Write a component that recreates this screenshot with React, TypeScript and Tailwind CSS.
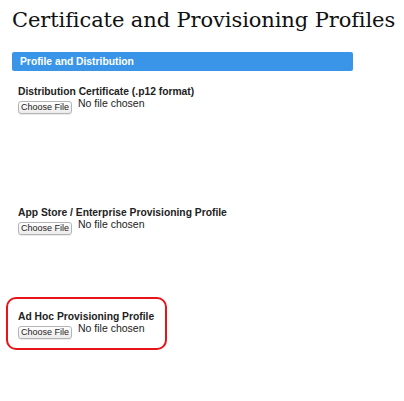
import React from "react";

function FileField({ label }: { label: string }) {
  return (
    <div>
      <div className="text-[10.3px] font-bold leading-[13px] text-[#222]">{label}</div>
      <div className="flex items-start mt-[1px]">
        <button className="mt-[2px] h-[13px] w-[54px] rounded-[3px] border border-[#b5b5b5] bg-gradient-to-b from-white to-[#ececec] text-[9px] leading-[11px] text-[#222] shadow-[0_1px_0_rgba(0,0,0,0.08)]">
          Choose File
        </button>
        <span className="ml-[6px] -mt-[2px] text-[10.5px] leading-[13px] text-[#222]">No file chosen</span>
      </div>
    </div>
  );
}

export default function App() {
  return (
    <div className="w-[404px] h-[401px] bg-white" style={{ fontFamily: '"Liberation Sans", Arial, sans-serif' }}>
      <h1
        className="pl-3 pt-[6px] h-[37px] text-[21px] leading-[28px] tracking-[-0.1px] text-[#111] whitespace-nowrap"
        style={{ fontFamily: '"DejaVu Serif", "Liberation Serif", serif' }}
      >
        Certificate and Provisioning Profiles
      </h1>
      <div className="ml-3 mt-[15px] w-[341px] h-[19px] rounded-[2px] bg-[#3a95e8] pl-2 text-[10.3px] font-bold leading-[19px] text-white">
        Profile and Distribution
      </div>
      <div className="pl-[18px] mt-[14px]">
        <FileField label="Distribution Certificate (.p12 format)" />
      </div>
      <div className="pl-[18px] mt-[92px]">
        <FileField label="App Store / Enterprise Provisioning Profile" />
      </div>
      <div className="ml-[6px] mt-[62px] w-[161px] h-[53px] rounded-[10px] border-2 border-[#e8141a] pl-[10px] pt-[11px]">
        <FileField label="Ad Hoc Provisioning Profile" />
      </div>
    </div>
  );
}
